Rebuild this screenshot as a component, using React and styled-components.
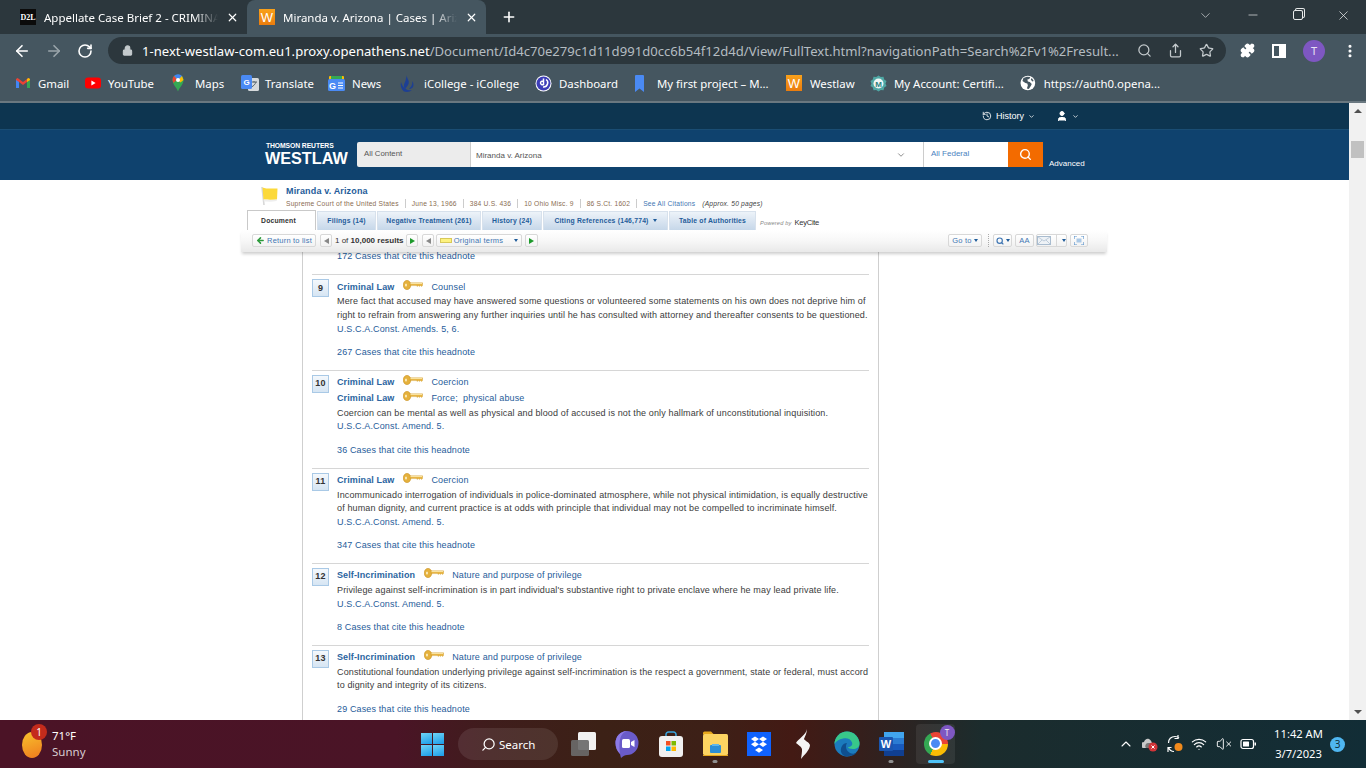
import React from 'react';
import styled, { createGlobalStyle } from 'styled-components';
import {
  ArrowLeft, ArrowRight, RotateCw, Lock, Search, Share, Star, Puzzle, EllipsisVertical,
  ChevronDown, ChevronUp, Minus, X, Plus, History, User, Wifi, VolumeX,
} from 'lucide-react';

const GlobalStyle = createGlobalStyle`
  html, body { margin: 0; padding: 0; height: 100%; overflow: hidden; }
  * { box-sizing: border-box; }
  body { font-family: "Liberation Sans", Arial, sans-serif; background: #fff; }
`;

const Screen = styled.div`
  width: 1366px;
  height: 768px;
  display: flex;
  flex-direction: column;
  overflow: hidden;
`;

/* browser chrome */
const TabStrip = styled.div`
  height: 34px;
  background: #2c373d;
  display: flex;
  align-items: flex-end;
  padding-left: 8px;
  flex-shrink: 0;
`;

const Tab = styled.div`
  width: ${p => p.$width}px;
  height: 34px;
  border-radius: 8px 8px 0 0;
  background: ${p => (p.$active ? '#455660' : 'transparent')};
  display: flex;
  align-items: center;
  padding: 0 8px 0 12px;
  gap: 8px;
  color: #fff;
`;

const TabTitle = styled.span`
  flex: 1;
  min-width: 0;
  font: 11.5px "Noto Sans", sans-serif;
  white-space: nowrap;
  overflow: hidden;
  -webkit-mask-image: linear-gradient(90deg, #000 86%, transparent);
  mask-image: linear-gradient(90deg, #000 86%, transparent);
`;

const Favicon = styled.span`
  width: 16px;
  height: 16px;
  flex-shrink: 0;
  display: flex;
  align-items: center;
  justify-content: center;
  font-family: ${p => (p.$kind === 'd2l' ? '"Liberation Serif", serif' : '"Liberation Sans", sans-serif')};
  font-size: ${p => (p.$kind === 'd2l' ? '8px' : '13px')};
  font-weight: ${p => (p.$kind === 'd2l' ? 700 : 400)};
  color: #fff;
  background: ${p => (p.$kind === 'd2l' ? '#0b0b0b' : 'linear-gradient(180deg,#f9a11b,#ea7c0e)')};
`;

const NewTab = styled.span`
  margin-left: 15px;
  height: 34px;
  display: flex;
  align-items: center;
  color: #fff;
`;

const WindowControls = styled.div`
  margin-left: auto;
  width: 176px;
  display: flex;
  align-items: center;
  justify-content: space-between;
  height: 30px;
  color: #e8eaeb;
  padding: 0 15px 0 8px;
  align-self: flex-start;
`;

const RestoreIcon = styled.span`
  width: 10px;
  height: 10px;
  border: 1px solid #e8eaeb;
  border-radius: 2px;
  box-shadow: 2px -2px 0 -1px #2c373d, 2px -2px 0 0 #e8eaeb;
`;

const Toolbar = styled.div`
  height: 33px;
  background: #455660;
  display: flex;
  align-items: center;
  padding: 0 0 0 13px;
  flex-shrink: 0;
  color: #fff;
`;

const NavIcons = styled.div`
  display: flex;
  align-items: center;
  gap: 14px;
  width: 95px;
`;

const Omnibox = styled.div`
  width: 1118px;
  height: 27px;
  border-radius: 14px;
  background: #2c373d;
  display: flex;
  align-items: center;
  padding: 0 10px 0 14px;
  color: #c4cacd;
`;

const Url = styled.div`
  margin-left: 9px;
  width: 983px;
  font: 13.1px "Noto Sans", sans-serif;
  white-space: nowrap;
  overflow: hidden;
  color: #b4bcc1;
  b { font-weight: 400; color: #fff; }
`;

const OmniIcons = styled.div`
  margin-left: 12px;
  display: flex;
  align-items: center;
  gap: 16px;
`;

const ToolIcons = styled.div`
  display: flex;
  align-items: center;
  margin-left: 14px;
  gap: 17px;
`;

const SidePanelIcon = styled.span`
  width: 14px;
  height: 14px;
  border: 2px solid #fff;
  display: block;
  background: linear-gradient(90deg, transparent 50%, #fff 50%);
`;

const Avatar = styled.span`
  width: 22px;
  height: 22px;
  border-radius: 50%;
  background: #7e57c2;
  color: #e9e1f5;
  display: flex;
  align-items: center;
  justify-content: center;
  font: 11px "Noto Sans", sans-serif;
`;

const BookmarksBar = styled.div`
  height: 34px;
  background: #455660;
  display: flex;
  align-items: center;
  padding: 0 0 2px 15px;
  flex-shrink: 0;
`;

const BookmarkItem = styled.div`
  display: flex;
  align-items: center;
  gap: ${p => p.$gap || 7}px;
  color: #fff;
  font: 11.4px "Noto Sans", sans-serif;
  white-space: nowrap;
  width: ${p => p.$width}px;
  flex-shrink: 0;
`;

const ChromeEdge = styled.div`
  height: 2px;
  background: #6a7880;
  flex-shrink: 0;
`;

/* page */
const Viewport = styled.div`
  flex: 1;
  min-height: 0;
  display: flex;
`;

const Page = styled.div`
  flex: 1;
  min-width: 0;
  display: flex;
  flex-direction: column;
`;

const Scrollbar = styled.div`
  width: 17px;
  background: #f1f1f1;
  display: flex;
  flex-direction: column;
  align-items: center;
  padding-top: 6px;
`;

const ArrowUp = styled.span`
  width: 0;
  height: 0;
  border-left: 4px solid transparent;
  border-right: 4px solid transparent;
  border-bottom: 4px solid #505050;
`;

const ArrowDown = styled.span`
  width: 0;
  height: 0;
  margin-top: auto;
  margin-bottom: 6px;
  border-left: 4px solid transparent;
  border-right: 4px solid transparent;
  border-top: 4px solid #505050;
`;

const Thumb = styled.span`
  width: 13px;
  height: 17px;
  margin-top: 28px;
  background: #c1c1c1;
`;

const TopBar = styled.div`
  height: 27px;
  background: #0d3550;
  border-bottom: 1px solid #1a4d73;
  display: flex;
  align-items: center;
  padding-left: 982px;
  color: #fff;
  font-size: 9px;
  flex-shrink: 0;
`;

const TopLink = styled.span`
  display: flex;
  align-items: center;
  gap: 4px;
  margin-right: ${p => p.$gap || 0}px;
`;

const SearchBand = styled.div`
  height: 50px;
  background: #0f426e;
  display: flex;
  align-items: flex-start;
  padding: 12px 0 0 265px;
  flex-shrink: 0;
`;

const Logo = styled.div`
  width: 92px;
  color: #fff;
`;

const LogoTop = styled.div`
  font-size: 6.8px;
  font-weight: 700;
  line-height: 7px;
  letter-spacing: -0.1px;
  padding-left: 1px;
`;

const LogoMain = styled.div`
  font-size: 16.2px;
  font-weight: 700;
  line-height: 17px;
  margin-top: 1px;
`;

const SearchBox = styled.div`
  display: flex;
  height: 25px;
  width: 686px;
`;

const ContentSelect = styled.div`
  width: 114px;
  background: #ececec;
  color: #555;
  font-size: 7.8px;
  padding: 7px 0 0 7px;
  border-right: 1px solid #ccc;
  border-radius: 2px 0 0 2px;
`;

const QueryInput = styled.div`
  width: 453px;
  background: #fff;
  color: #555;
  font-size: 8px;
  padding: 9px 0 0 5px;
  border-right: 1px solid #ccc;
  display: flex;
  justify-content: space-between;
  svg { margin: -1px 17px 0 0; color: #777; }
`;

const Jurisdiction = styled.div`
  width: 84px;
  background: #fff;
  color: #4a82c0;
  font-size: 8px;
  padding: 7px 0 0 7px;
`;

const SearchButton = styled.div`
  width: 35px;
  background: #f36b00;
  color: #fff;
  display: flex;
  align-items: center;
  justify-content: center;
`;

const Advanced = styled.a`
  color: #fff;
  font-size: 8px;
  margin: 17px 0 0 6px;
`;

const DocArea = styled.div`
  flex: 1;
  min-height: 0;
  background: #fff;
  overflow: hidden;
  display: flex;
  flex-direction: column;
`;

const DocHead = styled.div`
  position: relative;
  z-index: 2;
  height: 72px;
  margin-left: 241px;
  width: 866px;
  flex-shrink: 0;
  background: #fff;
`;

const DocTitleRow = styled.div`
  height: 30px;
  display: flex;
  padding: 6px 0 0 20px;
`;

const DocTitleText = styled.div`
  margin-left: 7px;
`;

const DocTitle = styled.div`
  color: #1f5c9a;
  font-size: 9px;
  font-weight: 700;
  line-height: 11px;
  letter-spacing: 0.15px;
`;

const CiteRow = styled.div`
  display: flex;
  align-items: center;
  font-size: 6.7px;
  line-height: 9px;
  margin-top: 2px;
  letter-spacing: 0.2px;
  color: #8a6d52;
`;

const Cite = styled.span`
  padding: 0 ${p => (p.$plain ? 0 : 6)}px 0 ${p => (p.$plain ? 1 : 6)}px;
  border-left: 1px solid #ccc;
  white-space: nowrap;
  color: ${p => p.$color || '#8a6d52'};
  font-style: ${p => (p.$note ? 'italic' : 'normal')};
  border-left-width: ${p => (p.$plain ? 0 : 1)}px;
  &:first-child { padding-left: 0; border-left: 0; }
`;

const TabsRow = styled.div`
  height: 20px;
  padding-left: 6px;
  display: flex;
  align-items: flex-end;
  gap: 1px;
`;

const DocTab = styled.div`
  width: ${p => p.$width}px;
  height: ${p => (p.$active ? 20 : 19)}px;
  padding: 0 ${p => (p.$active ? 6 : 0)}px 1px 0;
  display: flex;
  align-items: center;
  justify-content: center;
  gap: 4px;
  font-size: 6.8px;
  font-weight: 700;
  letter-spacing: 0.2px;
  white-space: nowrap;
  color: ${p => (p.$active ? '#333' : '#1f5c9a')};
  background: ${p => (p.$active ? '#fff' : 'linear-gradient(180deg,#edf3f9,#c6d7e9)')};
  border: 1px solid ${p => (p.$active ? '#c9c9c9' : '#d7e1ec')};
  border-bottom: 0;
`;

const Caret = styled.span`
  width: 0;
  height: 0;
  border-left: 2.5px solid transparent;
  border-right: 2.5px solid transparent;
  border-top: 3px solid ${p => p.$color || '#1f5c9a'};
`;

const PoweredBy = styled.div`
  margin: 0 0 3px 3px;
  display: flex;
  align-items: center;
  gap: 3px;
  font-size: 5.6px;
  font-style: italic;
  color: #888;
  letter-spacing: 0.2px;
  b { font-style: normal; font-weight: 400; font-size: 7.6px; color: #333; letter-spacing: -0.3px; }
`;

const DocToolbar = styled.div`
  height: 22px;
  display: flex;
  align-items: center;
  padding: 0 19px 1px 11px;
  background: linear-gradient(180deg,#ffffff 0%,#f7f7f7 50%,#e9e9e9 100%);
  box-shadow: 0 3px 3px -1px rgba(0,0,0,0.2);
`;

const ToolBtn = styled.div`
  width: ${p => p.$width}px;
  height: 13px;
  margin-left: ${p => p.$ml || 0}px;
  flex-shrink: 0;
  display: flex;
  align-items: center;
  justify-content: center;
  gap: 2px;
  font-size: 7.5px;
  letter-spacing: 0.2px;
  color: #3f76b3;
  white-space: nowrap;
  background: linear-gradient(180deg,#fff,#f2f2f2);
  border: 1px solid #d8d8d8;
  border-radius: 2px;
`;

const ResultCount = styled.span`
  margin-left: 3px;
  width: 71px;
  font-size: 8px;
  color: #333;
  white-space: nowrap;
  b { font-weight: 700; }
`;

const Tri = styled.span`
  width: 0;
  height: 0;
  border-top: 3px solid transparent;
  border-bottom: 3px solid transparent;
  ${p => (p.$left
    ? `border-right: 5px solid ${p.$color};`
    : `border-left: 5px solid ${p.$color};`)}
`;

const Swatch = styled.span`
  width: 12px;
  height: 5px;
  background: #fdf27f;
  border: 1px solid #d8c95a;
`;

const TermsLabel = styled.span`
  margin-right: 9px;
`;

const DottedSep = styled.span`
  height: 13px;
  margin: 0 4px 0 6px;
  border-left: 1px dotted #aaa;
`;

const MailSplit = styled.span`
  height: 13px;
  margin: 0 3px 0 3px;
  border-left: 1px solid #d8d8d8;
`;

const Spacer = styled.span`
  flex: 1;
`;

const Column = styled.div`
  margin: -3px 0 0 302px;
  width: 577px;
  flex: 1;
  border-left: 1px solid #cfcfcf;
  border-right: 1px solid #cfcfcf;
  padding: 0 9px 0 9px;
  font-size: 9px;
  letter-spacing: 0.135px;
  line-height: 13.6px;
  color: #3b3b3b;
`;

const HeadLink = styled.div`
  padding: 1px 0 0 25px;
  color: #1f5c9a;
  height: 25.4px;
  white-space: nowrap;
`;

const Note = styled.div`
  border-top: 1px solid #d6d6d6;
  padding: 4px 0 10px 0;
  display: flex;
`;

const NumberBox = styled.div`
  width: 17px;
  height: 18px;
  margin: 0 8px 0 0;
  flex-shrink: 0;
  border: 1px solid #a9c9e6;
  background: linear-gradient(180deg,#f4f8fc,#d6e5f3);
  color: #333;
  font-weight: 700;
  font-size: 9px;
  display: flex;
  align-items: center;
  justify-content: center;
`;

const NoteBody = styled.div`
  flex: 1;
  min-width: 0;
`;

const TopicLine = styled.div`
  height: 16px;
  display: flex;
  align-items: center;
  color: #1f5c9a;
  white-space: pre;
  svg { margin: -5px 8px 0 9px; }
`;

const Topic = styled.span`
  font-weight: 700;
  letter-spacing: 0.12px;
  color: #2a64a0;
`;

const NoteText = styled.div`
  white-space: nowrap;
`;

const Blue = styled.div`
  color: #1f5c9a;
`;

const CitedLink = styled.div`
  color: #1f5c9a;
  margin-top: 10px;
`;

/* taskbar */
const Taskbar = styled.div`
  height: 48px;
  flex-shrink: 0;
  display: flex;
  align-items: center;
  background: linear-gradient(90deg,#4b1326 0%,#4a1426 29%,#3f1d1c 36%,#3c2116 44%,#3d2017 52%,#431a14 58%,#351f1c 63%,#1b2c2d 72%,#122d36 100%);
  color: #fff;
`;

const Weather = styled.div`
  width: 421px;
  display: flex;
  align-items: center;
  padding-left: 22px;
  gap: 10px;
  flex-shrink: 0;
`;

const WeatherIcon = styled.div`
  width: 20px;
  height: 26px;
  border-radius: 50%;
  background: linear-gradient(160deg,#f7c32d,#ef7a1e);
  position: relative;
  margin-top: 2px;
`;

const AlertBadge = styled.span`
  position: absolute;
  top: -8px;
  left: 9px;
  width: 16px;
  height: 16px;
  border-radius: 50%;
  background: #c42b1c;
  font: 10px/16px "Noto Sans", sans-serif;
  text-align: center;
  color: #fff;
`;

const WeatherText = styled.div`
  font: 11.5px/16px "Noto Sans", sans-serif;
  span { display: block; color: #d8ccd0; }
`;

const WinLogo = styled.div`
  width: 23px;
  height: 23px;
  display: grid;
  grid-template-columns: 1fr 1fr;
  gap: 1px;
`;

const WinPane = styled.span`
  background: linear-gradient(160deg,#6fd4f7,#1a9be8);
`;

const SearchPill = styled.div`
  margin-left: 14px;
  width: 100px;
  height: 32px;
  border-radius: 16px;
  background: rgba(255,255,255,0.09);
  display: flex;
  align-items: center;
  padding-left: 23px;
  gap: 3px;
  font: 11.5px "Noto Sans", sans-serif;
  svg { transform: scaleX(-1); }
`;

const Apps = styled.div`
  margin-left: 3px;
  display: flex;
  align-items: center;
`;

const AppSlot = styled.div`
  width: ${p => p.$width || 44}px;
  height: 40px;
  margin-left: ${p => (p.$active ? 3 : 0)}px;
  display: flex;
  align-items: center;
  justify-content: center;
  position: relative;
  border-radius: 4px;
  background: ${p => (p.$active ? 'rgba(255,255,255,0.07)' : 'transparent')};
  &::after {
    content: '';
    display: ${p => (p.$dot || p.$active ? 'block' : 'none')};
    position: absolute;
    bottom: 1px;
    left: 50%;
    transform: translateX(-50%);
    width: ${p => (p.$active ? 16 : 5)}px;
    height: 3px;
    border-radius: 2px;
    background: ${p => (p.$active ? '#4fc3f7' : '#8f8f8f')};
  }
`;

const ChromeBall = styled.div`
  width: 24px;
  height: 24px;
  border-radius: 50%;
  background: conic-gradient(#ea4335 0 90deg,#fbbc04 90deg 210deg,#34a853 210deg 330deg,#ea4335 330deg);
  display: flex;
  align-items: center;
  justify-content: center;
  &::before {
    content: '';
    width: 9px;
    height: 9px;
    border-radius: 50%;
    background: #4a8af4;
    border: 2px solid #fff;
    box-sizing: content-box;
  }
`;

const ChromeWrap = styled.div`
  position: relative;
  margin-top: -1px;
`;

const ProfileDot = styled.span`
  position: absolute;
  top: -7px;
  right: -7px;
  width: 15px;
  height: 15px;
  border-radius: 50%;
  background: #7e57c2;
  color: #eee;
  font: 8px/15px "Noto Sans", sans-serif;
  text-align: center;
`;

const Tray = styled.div`
  margin-left: auto;
  display: flex;
  align-items: center;
  padding-right: 21px;
`;

const TrayIcons = styled.div`
  display: flex;
  align-items: center;
  gap: 8.5px;
  margin-right: 15px;
`;

const Clock = styled.div`
  width: 55px;
  text-align: center;
  font: 11.2px/20px "Noto Sans", sans-serif;
  color: #fff;
`;

const CountBadge = styled.span`
  margin-left: 4px;
  width: 15px;
  height: 15px;
  border-radius: 50%;
  background: #4fb6f0;
  color: #10303c;
  font: 10px/15px "Noto Sans", sans-serif;
  text-align: center;
`;

const Key = () => (
  <svg width="20" height="10" viewBox="0 0 20 10">
    <ellipse cx="4" cy="5" rx="3.8" ry="4.6" fill="#e5b13c" stroke="#c9911f" strokeWidth="0.6" />
    <ellipse cx="3" cy="5" rx="0.9" ry="1.500" fill="#fff3cc" />
    <path d="M7 2.800h12.600v2.600l-1 1.200-1.200-1-1 1-1.100-1-1 1-1-1H7z" fill="#e5b13c" stroke="#c9911f" strokeWidth="0.300" />
    <path d="M7.500 3.600h11.500" stroke="#fdeeb9" strokeWidth="0.900" />
  </svg>
);

const GmailIcon = () => (
  <svg width="16" height="16" viewBox="0 0 16 16">
    <path d="M1 4v9h3V7l4 3 4-3v6h3V4l-1.600-1L8 7 2.600 3z" fill="#ea4335" />
    <path d="M1 5v8h3V7z" fill="#4285f4" />
    <path d="M15 5v8h-3V7z" fill="#34a853" />
    <path d="M12 7l3-2V4l-1.600-1L12 4z" fill="#fbbc04" />
  </svg>
);

const YoutubeIcon = () => (
  <svg width="16" height="16" viewBox="0 0 16 16">
    <rect y="2.500" width="16" height="11" rx="3" fill="#f00" />
    <path d="M6.400 5.600L10.600 8l-4.200 2.400z" fill="#fff" />
  </svg>
);

const MapsIcon = () => (
  <svg width="12" height="18" viewBox="0 0 12 18">
    <path d="M6 17.500C5 14 .5 10.500.5 6a5.500 5.500 0 0 1 11 0c0 4.500-4.500 8-5.500 11.500z" fill="#34a853" />
    <path d="M2 2l8 0 1.500 4-3 2.500L2 2z" fill="#fbbc04" />
    <path d="M2 2a5.500 5.500 0 0 1 8 0L6 6z" fill="#4285f4" />
    <path d="M.5 6A5.500 5.500 0 0 1 2 2l3 3.500L1.500 9z" fill="#ea4335" />
    <circle cx="6" cy="6" r="2" fill="#fff" />
  </svg>
);

const TranslateIcon = () => (
  <svg width="18" height="17" viewBox="0 0 18 17">
    <rect x="7" y="3" width="11" height="13" rx="1.500" fill="#d6dadc" />
    <path d="M10 7h6M13 6v1.500M15 7c-.6 2-2.400 4-4.500 5" stroke="#56646c" strokeWidth="1" fill="none" />
    <rect width="11" height="14" rx="1.500" fill="#4a8af4" />
    <text x="5.500" y="10" fontSize="8" fontWeight="700" fill="#fff" textAnchor="middle" fontFamily="Liberation Sans">G</text>
  </svg>
);

const NewsIcon = () => (
  <svg width="17" height="17" viewBox="0 0 17 17">
    <rect x="1" y="1" width="15" height="5" rx="1" fill="#fbbc04" />
    <rect x="3" y="1" width="11" height="3" fill="#34a853" />
    <rect y="4" width="17" height="12" rx="1.500" fill="#4a8af4" />
    <text x="4.500" y="13.500" fontSize="9" fontWeight="700" fill="#fff" textAnchor="middle" fontFamily="Liberation Sans">G</text>
    <path d="M10 8h5M10 10.500h5M10 13h5" stroke="#fff" strokeWidth="1.200" />
  </svg>
);

const CollegeIcon = () => (
  <svg width="19" height="19" viewBox="0 0 19 19">
    <path d="M9 1c-1 3 3 5 1.500 9C10 12 8 13 7.500 15 5 13 6 10 7 8 8 6 8 3 9 1zM14 7c1 3-1 6-3 8 1.500 0 3-.5 4-2 1-2 .5-4.500-1-6zM3 8c-1 3 0 7 3 9.500 3 1 6 .5 8-1.500-4 1-9-1-11-8z" fill="#1d3f94" />
  </svg>
);

const DashIcon = () => (
  <svg width="17" height="17" viewBox="0 0 17 17">
    <circle cx="8.500" cy="8.500" r="8" fill="#fff" />
    <circle cx="8.500" cy="8.500" r="7" fill="#3d3db8" />
    <path d="M8.500 3.500v6a2 2 0 0 1-3-1.500c0-1.500 1.500-2.300 3-2M11 4.500c1.500 1 2 3 1.500 4.500-.6 2-2.500 3.200-4.500 3" fill="none" stroke="#fff" strokeWidth="1.500" />
  </svg>
);

const RibbonIcon = () => (
  <svg width="9" height="17" viewBox="0 0 9 17">
    <path d="M0 1a1 1 0 0 1 1-1h7a1 1 0 0 1 1 1v16l-4.500-3.500L0 17z" fill="#4a8af4" />
  </svg>
);

const AccountIcon = () => (
  <svg width="17" height="17" viewBox="0 0 17 17">
    <path d="M8.500.5l2.300 1.500 2.700-.2.700 2.600 2.300 1.600-1 2.500 1 2.500-2.300 1.600-.7 2.600-2.700-.2-2.300 1.500-2.300-1.500-2.700.2-.7-2.600L.5 11l1-2.500-1-2.500 2.300-1.600.7-2.600 2.700.2z" fill="#4fa7a4" />
    <circle cx="8.500" cy="8.500" r="5" fill="#eef7f6" />
    <text x="8.500" y="11.500" fontSize="8" fontWeight="700" fill="#2c7f7c" textAnchor="middle" fontFamily="Liberation Sans">M</text>
  </svg>
);

const GlobeIcon = () => (
  <svg width="16" height="16" viewBox="0 0 16 16">
    <circle cx="8" cy="8" r="7.500" fill="#fff" />
    <path d="M7 1.500L3.500 3 2.500 6l3 2 2 .5.5 2-1 3 2 .5 2-3 1-2-2-2-2-.5-.5-2 2-.5 1-2zM12 3l2 3-1.500.5-1.500-2z" fill="#455660" />
  </svg>
);

const FlagIcon = () => (
  <svg width="18" height="20" viewBox="0 0 18 20">
    <path d="M1 1l2 18" stroke="#d8d8d8" strokeWidth="1.600" />
    <path d="M1.500 1.500c4 1.500 9 1 15 1l-.5 11c-5 .5-10 0-13.500 0z" fill="#fcd93a" />
    <path d="M2.500 13.500c4 .5 9 .5 13.500 0l-.5 1.500c-5 1-9 .5-12.500 .5z" fill="#eee" />
  </svg>
);

const StoreIcon = () => (
  <svg width="24" height="26" viewBox="0 0 24 26">
    <path d="M7 6V3.500A2.500 2.500 0 0 1 9.500 1h5A2.500 2.500 0 0 1 17 3.500V6" fill="none" stroke="#39a7e0" strokeWidth="1.500" />
    <rect y="5" width="24" height="21" rx="3" fill="#f1f1f1" />
    <rect x="7" y="10" width="4.500" height="4.500" fill="#f25022" />
    <rect x="12.500" y="10" width="4.500" height="4.500" fill="#7fba00" />
    <rect x="7" y="15.500" width="4.500" height="4.500" fill="#00a4ef" />
    <rect x="12.500" y="15.500" width="4.500" height="4.500" fill="#ffb900" />
  </svg>
);

const TaskViewIcon = () => (
  <svg width="25" height="24" viewBox="0 0 25 24">
    <rect x="7" y="0" width="18" height="18" rx="1.500" fill="#f2f2f2" />
    <rect x="0" y="8" width="18" height="16" rx="1.500" fill="#6a6a6a" fillOpacity="0.92" />
  </svg>
);

const MeetIcon = () => (
  <svg width="24" height="29" viewBox="0 0 24 29">
    <path d="M12 1a11.500 12 0 0 1 0 24c-2 0-4 1-6 3l-1-4C2 21 .5 17 .5 13A11.500 12 0 0 1 12 1z" fill="#6a5bc9" />
    <path d="M0.500 13A11.500 12 0 0 1 12 1c-6 2-9 8-7 23C2 21 .5 17 .5 13z" fill="#8c7ae6" />
    <rect x="7" y="9" width="8" height="9" rx="1.500" fill="#fff" />
    <path d="M16 12l3.500-2v7L16 15z" fill="#fff" />
  </svg>
);

const FolderIcon = () => (
  <svg width="25" height="26" viewBox="0 0 25 26">
    <path d="M0 2a1.500 1.500 0 0 1 1.500-1.500h6.500l3 3H0z" fill="#e8a91d" />
    <rect y="3" width="25" height="21" rx="1.500" fill="#fcd462" />
    <rect y="24" width="25" height="1" fill="#e8a91d" />
    <rect x="7" y="14" width="11" height="8" rx="1" fill="#2d8fd5" />
    <rect x="9" y="13" width="7" height="2" fill="#5fb7ea" />
  </svg>
);

const DropboxIcon = () => (
  <svg width="24" height="24" viewBox="0 0 24 24">
    <rect width="24" height="24" fill="#0f62fe" />
    <path d="M8 4.500l4 2.600-4 2.600-4-2.600zM16 4.500l4 2.600-4 2.600-4-2.600zM8 9.700l4 2.600-4 2.600-4-2.600zM16 9.700l4 2.600-4 2.600-4-2.600zM12 15.500l4 2.600-4 2.600-4-2.600z" fill="#fff" />
  </svg>
);

const BoltIcon = () => (
  <svg width="16" height="30" viewBox="0 0 16 30">
    <path d="M12 0C11 6 3 10 1 14c2 2 5 3 6 6 .2 3-.5 6-1 10 3-4 9-9 9-14-1-3-5-4-6-6 1-3 3-6 3-10z" fill="#f4f4f4" />
  </svg>
);

const EdgeIcon = () => (
  <svg width="26" height="26" viewBox="0 0 26 26">
    <circle cx="13" cy="13" r="12.500" fill="#1b7bbd" />
    <path d="M.5 13A12.500 12.500 0 0 1 25.500 13c0 3-3 5-6.500 5-3 0-5-1-5-2 3 0 5-2 4-4.500C17 8 13 6.500 9 7.500 5 8.500 2 10 .5 13z" fill="#38c78a" />
    <path d="M14 25.500C8 26 5 20 8 15c1-2 3-3 5-3-2 3-1 8 3 10 2 1 5 1 7-.5-2 2.500-5 3.500-9 3.500z" fill="#0f4f8f" />
  </svg>
);

const WordIcon = () => (
  <svg width="25" height="24" viewBox="0 0 25 24">
    <rect x="5" y="0" width="20" height="24" rx="1.500" fill="#2b7cd3" />
    <rect x="5" y="0" width="20" height="6" fill="#41a5ee" />
    <rect x="5" y="12" width="20" height="6" fill="#185abd" />
    <rect x="5" y="18" width="20" height="6" fill="#103f91" />
    <rect x="0" y="5" width="14" height="14" rx="1" fill="#1a56b0" />
    <text x="7" y="16" fontSize="11" fontWeight="700" fill="#fff" textAnchor="middle" fontFamily="Liberation Sans">W</text>
  </svg>
);

const CloudErrorIcon = () => (
  <svg width="16" height="16" viewBox="0 0 16 16">
    <path d="M2 12a3 3 0 0 1 0-6c.5-2.500 3-4 5-3s3 3 3 5v4z" fill="#c9c9c9" />
    <path d="M4 12a3 3 0 0 1 2-5h3v5z" fill="#777" />
    <circle cx="11" cy="11" r="4.500" fill="#d13438" />
    <path d="M9.500 9.500l3 3m0-3l-3 3" stroke="#fff" strokeWidth="1" />
  </svg>
);

const SyncIcon = () => (
  <svg width="16" height="20" viewBox="0 0 16 20">
    <path d="M1.500 9C1.500 5 4 2.500 8 2.500c1.500 0 3 .5 4 1.500M11 1v3.500H7.500M1.500 13.500c1 2.500 3 4 5.500 4M1 18v-4.500h3.500" fill="none" stroke="#fff" strokeWidth="1.200" />
    <circle cx="11.500" cy="13" r="4" fill="#f08a1c" />
  </svg>
);

const BatteryIcon = () => (
  <svg width="16" height="12" viewBox="0 0 16 12">
    <rect x="1" y="1.500" width="12.500" height="9" rx="2" fill="none" stroke="#fff" strokeWidth="1.200" />
    <rect x="3" y="3.500" width="6" height="5" rx="0.600" fill="#fff" />
    <rect x="14.500" y="4.500" width="1.500" height="3" fill="#fff" />
  </svg>
);

const bookmarks = [
  { icon: <GmailIcon />, label: 'Gmail', width: 70 },
  { icon: <YoutubeIcon />, label: 'YouTube', width: 87 },
  { icon: <MapsIcon />, label: 'Maps', width: 69, gap: 11 },
  { icon: <TranslateIcon />, label: 'Translate', width: 87, gap: 6 },
  { icon: <NewsIcon />, label: 'News', width: 70, gap: 7 },
  { icon: <CollegeIcon />, label: 'iCollege - iCollege', width: 137, gap: 7 },
  { icon: <DashIcon />, label: 'Dashboard', width: 100, gap: 7 },
  { icon: <RibbonIcon />, label: 'My first project – M...', width: 151, gap: 13 },
  { icon: <Favicon $kind="w">W</Favicon>, label: 'Westlaw', width: 84, gap: 8 },
  { icon: <AccountIcon />, label: 'My Account: Certifi...', width: 150, gap: 7 },
  { icon: <GlobeIcon />, label: 'https://auth0.opena...', width: 140, gap: 8 },
];

const docTabs = [
  { label: 'Document', width: 69, active: true },
  { label: 'Filings (14)', width: 59 },
  { label: 'Negative Treatment (261)', width: 104 },
  { label: 'History (24)', width: 60 },
  { label: 'Citing References (146,774)', width: 125, caret: true },
  { label: 'Table of Authorities', width: 87 },
];

const notes = [
  {
    num: 9,
    topics: [['Criminal Law', 'Counsel']],
    text: [
      'Mere fact that accused may have answered some questions or volunteered some statements on his own does not deprive him of',
      'right to refrain from answering any further inquiries until he has consulted with attorney and thereafter consents to be questioned.',
    ],
    cite: 'U.S.C.A.Const. Amends. 5, 6.',
    link: '267 Cases that cite this headnote',
  },
  {
    num: 10,
    topics: [['Criminal Law', 'Coercion'], ['Criminal Law', 'Force;  physical abuse']],
    text: ['Coercion can be mental as well as physical and blood of accused is not the only hallmark of unconstitutional inquisition.'],
    cite: 'U.S.C.A.Const. Amend. 5.',
    link: '36 Cases that cite this headnote',
  },
  {
    num: 11,
    topics: [['Criminal Law', 'Coercion']],
    text: [
      'Incommunicado interrogation of individuals in police-dominated atmosphere, while not physical intimidation, is equally destructive',
      'of human dignity, and current practice is at odds with principle that individual may not be compelled to incriminate himself.',
    ],
    cite: 'U.S.C.A.Const. Amend. 5.',
    link: '347 Cases that cite this headnote',
  },
  {
    num: 12,
    topics: [['Self-Incrimination', 'Nature and purpose of privilege']],
    text: ["Privilege against self-incrimination is in part individual's substantive right to private enclave where he may lead private life."],
    cite: 'U.S.C.A.Const. Amend. 5.',
    link: '8 Cases that cite this headnote',
  },
  {
    num: 13,
    topics: [['Self-Incrimination', 'Nature and purpose of privilege']],
    text: [
      'Constitutional foundation underlying privilege against self-incrimination is the respect a government, state or federal, must accord',
      'to dignity and integrity of its citizens.',
    ],
    link: '29 Cases that cite this headnote',
  },
];

export default function App() {
  return (
    <Screen>
      <GlobalStyle />
      <TabStrip>
        <Tab $width={239}>
          <Favicon $kind="d2l">D2L</Favicon>
          <TabTitle>Appellate Case Brief 2 - CRIMINAL</TabTitle>
          <X size={13} strokeWidth={2.2} />
        </Tab>
        <Tab $width={239} $active>
          <Favicon $kind="w">W</Favicon>
          <TabTitle>Miranda v. Arizona | Cases | Arizona</TabTitle>
          <X size={13} strokeWidth={2.2} />
        </Tab>
        <NewTab><Plus size={16} strokeWidth={2.4} /></NewTab>
        <WindowControls>
          <ChevronDown size={15} strokeWidth={1} />
          <Minus size={14} strokeWidth={1.2} />
          <RestoreIcon />
          <X size={15} strokeWidth={1.2} />
        </WindowControls>
      </TabStrip>

      <Toolbar>
        <NavIcons>
          <ArrowLeft size={18} strokeWidth={2.2} />
          <ArrowRight size={18} strokeWidth={2.2} color="#9aa5ab" />
          <RotateCw size={16} strokeWidth={2.4} />
        </NavIcons>
        <Omnibox>
          <Lock size={11} fill="#c4cacd" strokeWidth={2.4} />
          <Url><b>1-next-westlaw-com.eu1.proxy.openathens.net</b>/Document/Id4c70e279c1d11d991d0cc6b54f12d4d/View/FullText.html?navigationPath=Search%2Fv1%2Fresult...</Url>
          <OmniIcons>
            <Search size={15} />
            <Share size={15} />
            <Star size={15} />
          </OmniIcons>
        </Omnibox>
        <ToolIcons>
          <Puzzle size={15} fill="#fff" />
          <SidePanelIcon />
          <Avatar>T</Avatar>
          <EllipsisVertical size={16} strokeWidth={2.6} />
        </ToolIcons>
      </Toolbar>

      <BookmarksBar>
        {bookmarks.map(b => (
          <BookmarkItem key={b.label} $width={b.width} $gap={b.gap}>{b.icon}{b.label}</BookmarkItem>
        ))}
      </BookmarksBar>
      <ChromeEdge />

      <Viewport>
        <Page>
          <TopBar>
            <TopLink $gap={21}>
              <History size={10} /> History <ChevronDown size={7} strokeWidth={2.5} />
            </TopLink>
            <TopLink>
              <User size={12} fill="#fff" /> <ChevronDown size={7} strokeWidth={2.5} />
            </TopLink>
          </TopBar>
          <SearchBand>
            <Logo>
              <LogoTop>THOMSON REUTERS</LogoTop>
              <LogoMain>WESTLAW</LogoMain>
            </Logo>
            <SearchBox>
              <ContentSelect>All Content</ContentSelect>
              <QueryInput>Miranda v. Arizona <ChevronDown size={10} strokeWidth={2} /></QueryInput>
              <Jurisdiction>All Federal</Jurisdiction>
              <SearchButton><Search size={13} strokeWidth={2.6} /></SearchButton>
            </SearchBox>
            <Advanced>Advanced</Advanced>
          </SearchBand>

          <DocArea>
            <DocHead>
              <DocTitleRow>
                <FlagIcon />
                <DocTitleText>
                  <DocTitle>Miranda v. Arizona</DocTitle>
                  <CiteRow>
                    <Cite>Supreme Court of the United States</Cite>
                    <Cite>June 13, 1966</Cite>
                    <Cite>384 U.S. 436</Cite>
                    <Cite>10 Ohio Misc. 9</Cite>
                    <Cite>86 S.Ct. 1602</Cite>
                    <Cite $color="#3f76b3">See All Citations</Cite>
                    <Cite $note $plain $color="#444">(Approx. 50 pages)</Cite>
                  </CiteRow>
                </DocTitleText>
              </DocTitleRow>
              <TabsRow>
                {docTabs.map(t => (
                  <DocTab key={t.label} $width={t.width} $active={t.active}>
                    {t.label}{t.caret && <Caret />}
                  </DocTab>
                ))}
                <PoweredBy>Powered by <b>KeyCite</b></PoweredBy>
              </TabsRow>
              <DocToolbar>
                <ToolBtn $width={64}><ArrowLeft size={9} strokeWidth={4} color="#2b9a3a" /> Return to list</ToolBtn>
                <ToolBtn $width={12} $ml={4}><Tri $left $color="#888" /></ToolBtn>
                <ResultCount>1 of <b>10,000 results</b></ResultCount>
                <ToolBtn $width={12}><Tri $color="#1d9a2b" /></ToolBtn>
                <ToolBtn $width={12} $ml={4}><Tri $left $color="#888" /></ToolBtn>
                <ToolBtn $width={86} $ml={2}><Swatch /> <TermsLabel>Original terms</TermsLabel><Caret /></ToolBtn>
                <ToolBtn $width={13} $ml={3}><Tri $color="#1d9a2b" /></ToolBtn>
                <Spacer />
                <ToolBtn $width={34}>Go to <Caret /></ToolBtn>
                <DottedSep />
                <ToolBtn $width={19}><Search size={8} strokeWidth={3.5} /><Caret /></ToolBtn>
                <ToolBtn $width={19} $ml={3}>AA</ToolBtn>
                <ToolBtn $width={31} $ml={2}>
                  <svg width="14" height="9" viewBox="0 0 14 9">
                    <rect x="0.500" y="0.500" width="13" height="8" fill="#eef2f6" stroke="#a9bccf" />
                    <path d="M1 1l6 4 6-4M1 8l4-4M13 8L9 4" fill="none" stroke="#a9bccf" strokeWidth="0.700" />
                  </svg>
                  <MailSplit />
                  <Caret />
                </ToolBtn>
                <ToolBtn $width={18} $ml={3}>
                  <svg width="10" height="9" viewBox="0 0 10 9">
                    <path d="M0 3V0h3M7 0h3v3M10 6v3H7M3 9H0V6" fill="none" stroke="#5b93cc" strokeWidth="1.200" />
                    <rect x="2.500" y="2.500" width="5" height="4" fill="#a9c8e6" />
                  </svg>
                </ToolBtn>
              </DocToolbar>
            </DocHead>

            <Column>
              <HeadLink>172 Cases that cite this headnote</HeadLink>
              {notes.map(n => (
                <Note key={n.num}>
                  <NumberBox>{n.num}</NumberBox>
                  <NoteBody>
                    {n.topics.map(([topic, sub]) => (
                      <TopicLine key={sub}>
                        <Topic>{topic}</Topic>
                        <Key />
                        {sub}
                      </TopicLine>
                    ))}
                    {n.text.map(line => <NoteText key={line}>{line}</NoteText>)}
                    {n.cite && <Blue>{n.cite}</Blue>}
                    <CitedLink>{n.link}</CitedLink>
                  </NoteBody>
                </Note>
              ))}
            </Column>
          </DocArea>
        </Page>
        <Scrollbar>
          <ArrowUp />
          <Thumb />
          <ArrowDown />
        </Scrollbar>
      </Viewport>

      <Taskbar>
        <Weather>
          <WeatherIcon><AlertBadge>1</AlertBadge></WeatherIcon>
          <WeatherText>71°F<span>Sunny</span></WeatherText>
        </Weather>
        <WinLogo>
          <WinPane /><WinPane /><WinPane /><WinPane />
        </WinLogo>
        <SearchPill><Search size={15} />Search</SearchPill>
        <Apps>
          <AppSlot><TaskViewIcon /></AppSlot>
          <AppSlot><MeetIcon /></AppSlot>
          <AppSlot><StoreIcon /></AppSlot>
          <AppSlot $dot><FolderIcon /></AppSlot>
          <AppSlot><DropboxIcon /></AppSlot>
          <AppSlot><BoltIcon /></AppSlot>
          <AppSlot><EdgeIcon /></AppSlot>
          <AppSlot $dot><WordIcon /></AppSlot>
          <AppSlot $active $width={39}>
            <ChromeWrap>
              <ChromeBall />
              <ProfileDot>T</ProfileDot>
            </ChromeWrap>
          </AppSlot>
        </Apps>
        <Tray>
          <TrayIcons>
            <ChevronUp size={16} strokeWidth={1.6} />
            <CloudErrorIcon />
            <SyncIcon />
            <Wifi size={16} strokeWidth={1.8} />
            <VolumeX size={16} strokeWidth={1.4} />
            <BatteryIcon />
          </TrayIcons>
          <Clock>11:42 AM<br />3/7/2023</Clock>
          <CountBadge>3</CountBadge>
        </Tray>
      </Taskbar>
    </Screen>
  );
}
